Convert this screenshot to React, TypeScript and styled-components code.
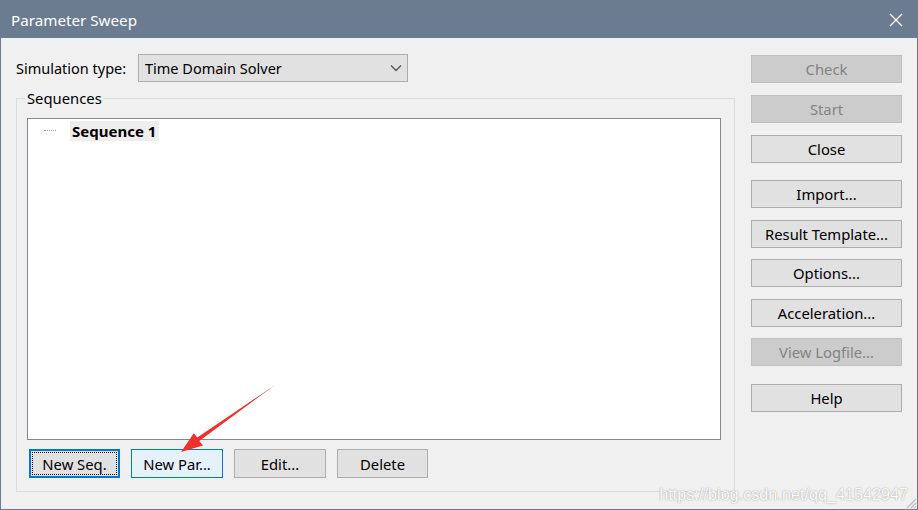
import React from "react";
import styled, { createGlobalStyle, css } from "styled-components";

const Global = createGlobalStyle`
  html, body { margin: 0; padding: 0; }
  body { width: 918px; height: 510px; overflow: hidden; background: #f0f0f0; }
  * { box-sizing: border-box; }
`;

const UI_FONT = `"Noto Sans", "Open Sans", Arial, sans-serif`;

const Window = styled.div`
  position: relative;
  width: 918px;
  height: 510px;
  border: 1px solid #6b7c90;
  background: #f0f0f0;
  display: flex;
  flex-direction: column;
  font-family: ${UI_FONT};
  font-size: 14.5px;
  color: #000;
`;

const TitleBar = styled.div`
  height: 37px;
  flex: none;
  background: #6b7c90;
  display: flex;
  align-items: center;
  justify-content: space-between;
  padding: 0 14px 0 10px;
  color: #fff;
  font-size: 15.2px;
`;

const Body = styled.div`
  flex: 1;
  display: flex;
  gap: 16px;
  padding: 16px 15px 0 15px;
`;

const LeftCol = styled.div`
  width: 719px;
  display: flex;
  flex-direction: column;
`;

const SelectRow = styled.div`
  display: flex;
  align-items: center;
  height: 28px;
`;

const Label = styled.span`
  width: 122px;
  flex: none;
`;

const Select = styled.div`
  width: 270px;
  height: 28px;
  background: #e1e1e1;
  border: 1px solid #adadad;
  display: flex;
  align-items: center;
  justify-content: space-between;
  padding: 0 5px 0 6px;
`;

const Group = styled.fieldset`
  margin: 6px 0 0 0;
  border: 1px solid #dcdcdc;
  padding: 10px 13px 13px 10px;
  min-width: 0;
`;

const Legend = styled.legend`
  padding: 0 2px;
  margin-left: -2px;
  line-height: 20px;
  height: 20px;
  font-size: 14.8px;
`;

const Tree = styled.div`
  height: 322px;
  background: #fff;
  border: 1px solid #828790;
  padding: 1px 0 0 16px;
`;

const TreeItem = styled.div`
  display: flex;
  align-items: center;
  height: 21px;
`;

const TreeLine = styled.span`
  width: 12px;
  border-top: 1px dotted #a0a0a0;
  margin-right: 14px;
`;

const TreeLabel = styled.span`
  font-weight: bold;
  background: #eeeeee;
  padding: 0 3px 0 2px;
  line-height: 20px;
  font-size: 15px;
`;

const ButtonRow = styled.div`
  display: flex;
  gap: 11px;
  margin-top: 9px;
  padding-left: 2px;
`;

type Variant = "normal" | "disabled" | "hover" | "focused";

const Btn = styled.div<{ $variant?: Variant; $w?: number; $h?: number }>`
  position: relative;
  width: ${(p) => p.$w ?? 151}px;
  height: ${(p) => p.$h ?? 28}px;
  display: flex;
  align-items: center;
  justify-content: center;
  background: #e1e1e1;
  border: 1px solid #adadad;
  color: #000;
  font-size: 14.8px;
  ${(p) =>
    p.$variant === "disabled" &&
    css`
      background: #cccccc;
      border-color: #bfbfbf;
      color: #838383;
    `}
  ${(p) =>
    p.$variant === "hover" &&
    css`
      background: #e5f1fb;
      border-color: #0078d7;
    `}
  ${(p) =>
    p.$variant === "focused" &&
    css`
      border: 2px solid #0078d7;
      &::after {
        content: "";
        position: absolute;
        inset: 1px;
        border: 1px dotted #000;
      }
    `}
`;

const RightCol = styled.div`
  width: 151px;
  display: flex;
  flex-direction: column;
  margin-top: 1px;
`;

const BtnGroup = styled.div<{ $gap: number; $mt?: number }>`
  display: flex;
  flex-direction: column;
  gap: ${(p) => p.$gap}px;
  margin-top: ${(p) => p.$mt ?? 0}px;
`;

const Overlay = styled.svg`
  position: absolute;
  left: 0;
  top: 0;
  pointer-events: none;
`;

const Watermark = styled.div`
  position: absolute;
  right: 9px;
  bottom: 5px;
  font-family: "Liberation Sans", Arial, sans-serif;
  font-size: 16px;
  color: rgba(255, 255, 255, 0.95);
  text-shadow: 0 0 1px #a8a8a8, 0 0 2px #c0c0c0;
  letter-spacing: 0.1px;
`;

const Grip = styled.svg`
  position: absolute;
  right: 0;
  bottom: 0;
`;

export default function App() {
  return (
    <>
      <Global />
      <Window>
        <TitleBar>
          <span>Parameter Sweep</span>
          <svg width="14" height="14" viewBox="0 0 14 14">
            <path d="M1 1 L13 13 M13 1 L1 13" stroke="#fff" strokeWidth="1.3" fill="none" />
          </svg>
        </TitleBar>
        <Body>
          <LeftCol>
            <SelectRow>
              <Label>Simulation type:</Label>
              <Select>
                <span>Time Domain Solver</span>
                <svg width="12" height="8" viewBox="0 0 12 8">
                  <path d="M1 1.5 L6 6.5 L11 1.5" stroke="#555" strokeWidth="1.3" fill="none" />
                </svg>
              </Select>
            </SelectRow>
            <Group>
              <Legend>Sequences</Legend>
              <Tree>
                <TreeItem>
                  <TreeLine />
                  <TreeLabel>Sequence 1</TreeLabel>
                </TreeItem>
              </Tree>
              <ButtonRow>
                <Btn $variant="focused" $w={91} $h={29}>New Seq.</Btn>
                <Btn $variant="hover" $w={92} $h={29}>New Par...</Btn>
                <Btn $w={92} $h={29}>Edit...</Btn>
                <Btn $w={91} $h={29}>Delete</Btn>
              </ButtonRow>
            </Group>
          </LeftCol>
          <RightCol>
            <BtnGroup $gap={12}>
              <Btn $variant="disabled">Check</Btn>
              <Btn $variant="disabled">Start</Btn>
              <Btn>Close</Btn>
            </BtnGroup>
            <BtnGroup $gap={11.5} $mt={17}>
              <Btn>Import...</Btn>
              <Btn>Result Template...</Btn>
              <Btn>Options...</Btn>
              <Btn>Acceleration...</Btn>
              <Btn $variant="disabled">View Logfile...</Btn>
            </BtnGroup>
            <BtnGroup $gap={0} $mt={18}>
              <Btn>Help</Btn>
            </BtnGroup>
          </RightCol>
        </Body>
        <Overlay width="918" height="510" viewBox="0 0 918 510">
          <polygon
            points="180,451 192.8,432.2 196.3,436.6 274,384 198.3,440 202,444.5"
            fill="#f2302b"
          />
        </Overlay>
        <Watermark>https://blog.csdn.net/qq_41542947</Watermark>
        <Grip width="14" height="14" viewBox="0 0 14 14">
          <path d="M13 4 L4 13 M13 8 L8 13 M13 11.5 L11.5 13" stroke="#b8bcc4" strokeWidth="1.2" />
        </Grip>
      </Window>
    </>
  );
}
